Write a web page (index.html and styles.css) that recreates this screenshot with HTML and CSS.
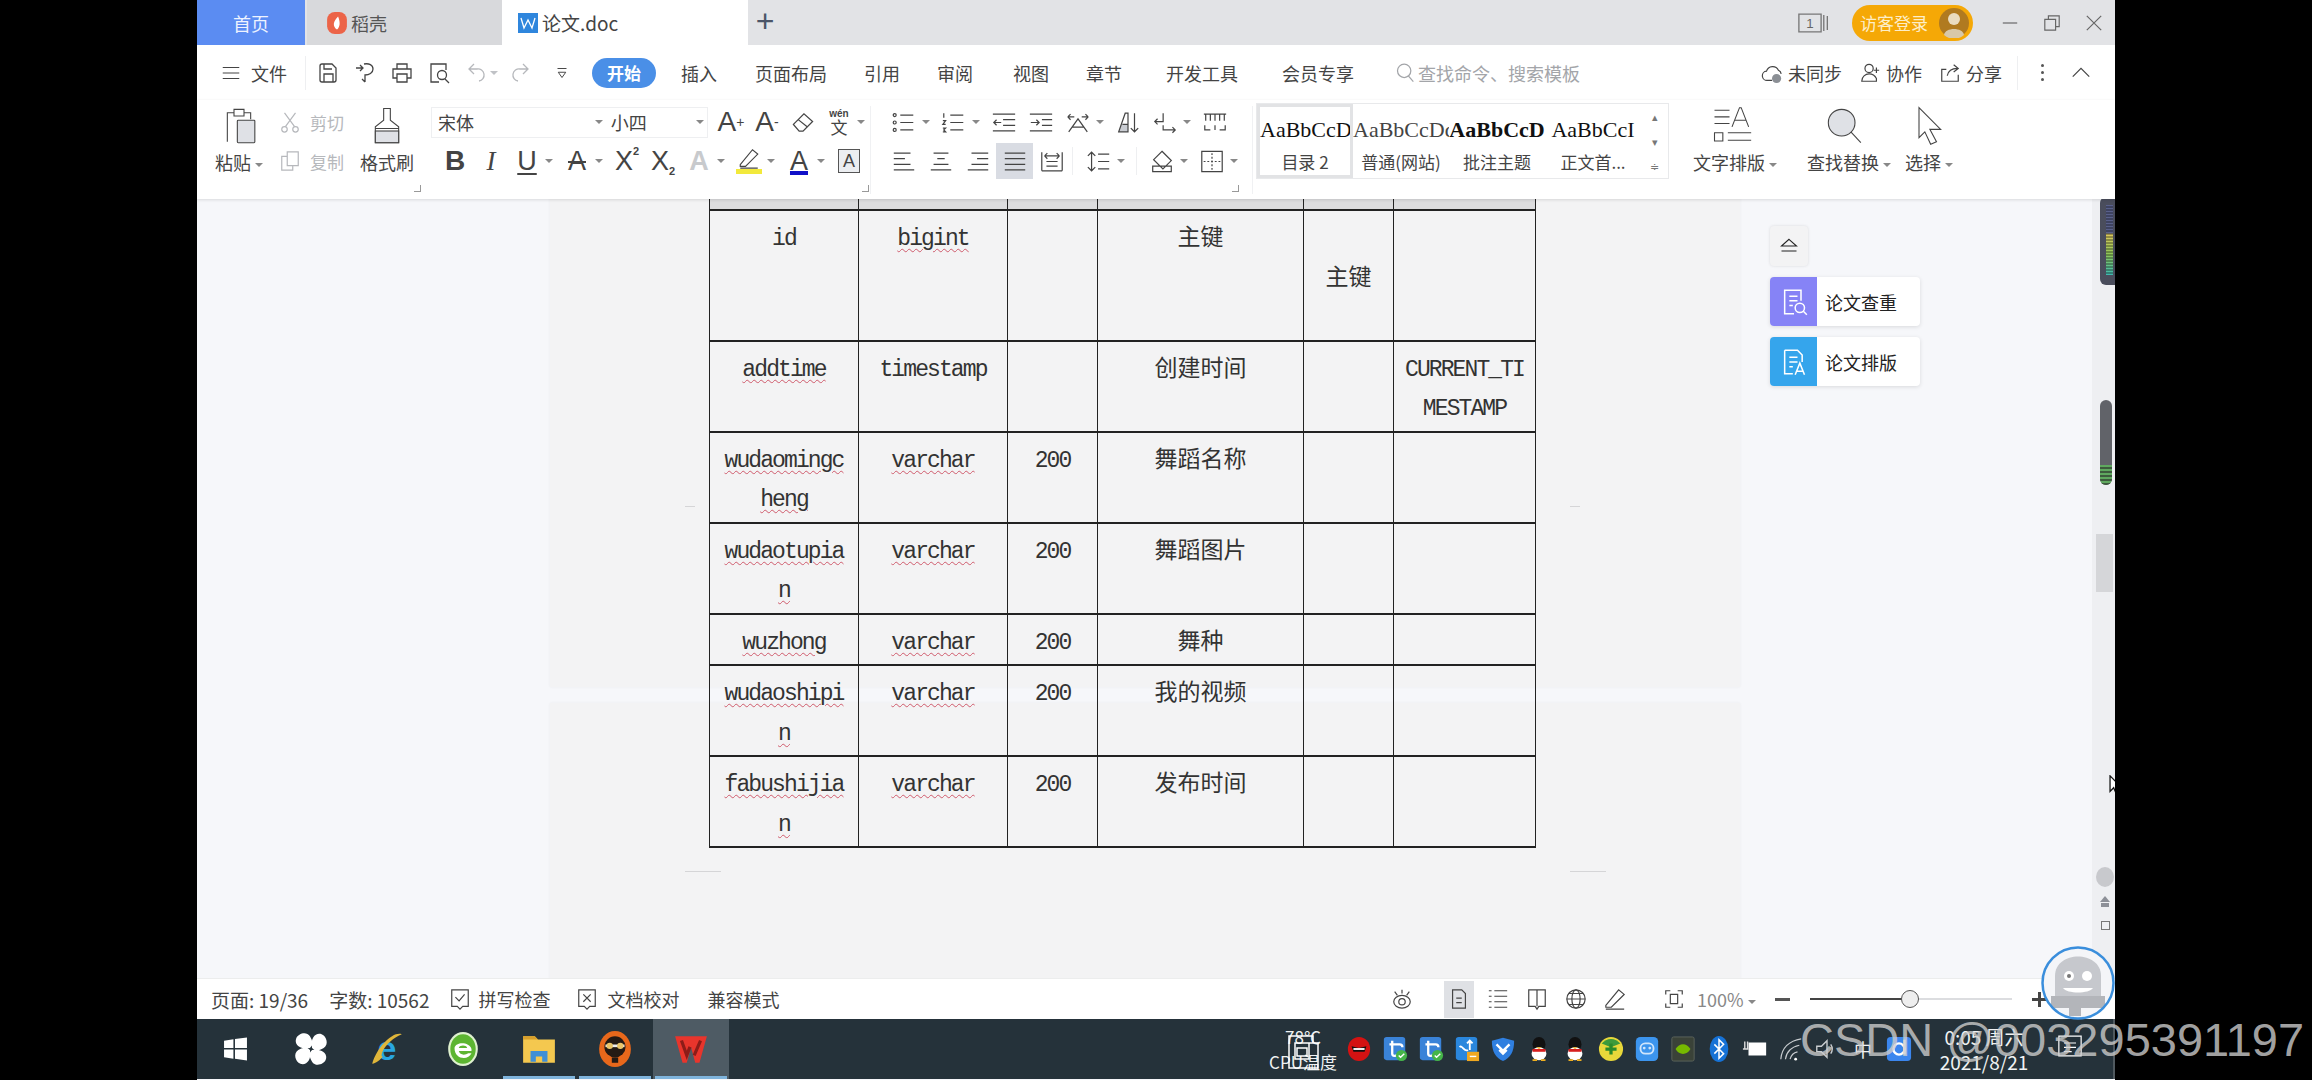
FILE: index.html
```html
<!DOCTYPE html>
<html>

<head>
    <meta charset="UTF-8">
    <link rel="stylesheet" href="styles.css">
    <title>论文.doc</title>
</head>

<body>
    <svg class="sprite" xmlns="http://www.w3.org/2000/svg">
        <symbol id="iMenu" viewBox="0 0 24 24"><path d="M3 6h18M3 12h18M3 18h18" /></symbol>
        <symbol id="iSave" viewBox="0 0 24 24"><path d="M4 5a2 2 0 0 1 2-2h10l4 4v12a2 2 0 0 1-2 2H6a2 2 0 0 1-2-2zM8 21v-8h9v8M8 3v5h8" /></symbol>
        <symbol id="iSend" viewBox="0 0 24 24"><path d="M3 7h7M7 4l3 3-3 3M11 3c5-1 9 1 9 5s-4 6-8 6v7M12 21l-3-3" /></symbol>
        <symbol id="iPrint" viewBox="0 0 24 24"><path d="M7 8V3h10v5M7 17H3V8h18v9h-4M7 13h10v8H7z" /></symbol>
        <symbol id="iPreview" viewBox="0 0 24 24"><path d="M19 9V3H4v18h8" /><circle cx="15" cy="14" r="4.5" /><path d="M18 18l4 4" /></symbol>
        <symbol id="iUndo" viewBox="0 0 24 24"><path d="M10 3L5 8l5 5M5 8h8a6 6 0 0 1 2 12" /></symbol>
        <symbol id="iRedo" viewBox="0 0 24 24"><path d="M14 3l5 5-5 5M19 8h-8a6 6 0 0 0-2 12" /></symbol>
        <symbol id="iCustom" viewBox="0 0 24 24"><path d="M6 6h12M7 11h10l-5 7z" /></symbol>
        <symbol id="iCloud" viewBox="0 0 24 24"><path d="M12 20H7a5 5 0 0 1-1-10 7 7 0 0 1 13-1 5 5 0 0 1 3 4" /><circle class="solid" cx="17" cy="18" r="5" /></symbol>
        <symbol id="iTeam" viewBox="0 0 24 24"><circle cx="11" cy="7" r="4.5" /><path d="M3 21c0-5 4-8 8-8s6 1 8 5v3H3zM19 6v6M16 9h6" /></symbol>
        <symbol id="iShare" viewBox="0 0 24 24"><path d="M8 8H3v13h18v-7M9 15c1-5 5-8 11-8M16 3l5 4-5 4" /></symbol>
        <symbol id="iChevron" viewBox="0 0 24 24"><path d="M3 16l9-9 9 9" /></symbol>
        <symbol id="iScissors" viewBox="0 0 24 24"><circle cx="6" cy="20" r="3" /><circle cx="18" cy="20" r="3" /><path d="M7 17L18 2M17 17L6 2" /></symbol>
        <symbol id="iCopy" viewBox="0 0 24 24"><path d="M9 17V2h12v15zM9 7H3v15h12v-5" /></symbol>
        <symbol id="iPaste" viewBox="0 0 48 48"><path d="M10 43V8h8V4h12v4h8v8M18 8v4h12V8" /><rect class="shade" x="22" y="17" width="21" height="27" rx="1" /></symbol>
        <symbol id="iBrush" viewBox="0 0 48 48"><path d="M20 3h8v14l10 8v19H10V25l10-8zM10 27h28" /><rect class="shade" x="10" y="30" width="28" height="14" /></symbol>
        <symbol id="iEraser" viewBox="0 0 24 24"><path d="M2 14L13 3l9 8-10 10H8zM7 9l10 8" /></symbol>
        <symbol id="iBullets" viewBox="0 0 28 24"><path d="M10 4h14M10 12h14M10 20h14" /><circle cx="4" cy="4" r="1.6" /><circle cx="4" cy="12" r="1.6" /><circle cx="4" cy="20" r="1.6" /></symbol>
        <symbol id="iNumbers" viewBox="0 0 28 24"><path d="M10 4h14M10 12h14M10 20h14M3 2v5M2 10h3l-3 4h3M2 18h3l-2 2 2 2H2" /></symbol>
        <symbol id="iOutdent" viewBox="0 0 28 24"><path d="M2 3h24M2 21h24M13 9h13M13 15h13M11 12H3M6 9l-3 3 3 3" /></symbol>
        <symbol id="iIndent" viewBox="0 0 28 24"><path d="M2 3h24M2 21h24M15 9h11M15 15h11M3 12h9M9 9l3 3-3 3" /></symbol>
        <symbol id="iCross" viewBox="0 0 28 24"><path d="M4 22L14 8l10 14M8 17h12M3 6h7M3 6l3-3M3 6l3 3M25 6h-7M25 6l-3-3M25 6l-3 3" /></symbol>
        <symbol id="iSort" viewBox="0 0 28 24"><path class="shadeFill" d="M4 22l3-8h7v8z" /><path d="M4 22L11 2h3v20zM8 14h6M21 2v20M17 18l4 4 4-4" /></symbol>
        <symbol id="iTurn" viewBox="0 0 28 24"><path d="M12 2v9H3M6 8l-3 3 3 3M12 15v5h13M22 17l3 3-3 3" /></symbol>
        <symbol id="iRuler" viewBox="0 0 28 24"><path d="M2 3h24M4 3v7M9 3v7M14 3v7M19 3v7M24 3v7M3 15v5h6M25 15v5h-6M14 15v5" /></symbol>
        <symbol id="iLeft" viewBox="0 0 28 24"><path d="M3 3h18M3 9h12M3 15h18M3 21h22" /></symbol>
        <symbol id="iCenter" viewBox="0 0 28 24"><path d="M6 3h16M10 9h8M6 15h16M3 21h22" /></symbol>
        <symbol id="iRight" viewBox="0 0 28 24"><path d="M7 3h18M13 9h12M7 15h18M3 21h22" /></symbol>
        <symbol id="iJustify" viewBox="0 0 28 24"><path d="M3 3h22M3 9h22M3 15h22M3 21h22" /></symbol>
        <symbol id="iDistribute" viewBox="0 0 28 24"><path d="M3 2v20M25 2v20M3 22h22M8 12h12M8 17h12M6 6h16M6 6l3-3M6 6l3 3M22 6l-3-3M22 6l-3 3" /></symbol>
        <symbol id="iSpacing" viewBox="0 0 28 24"><path d="M6 2v20M2 6l4-4 4 4M2 18l4 4 4-4M13 4h12M13 12h12M13 20h12" /></symbol>
        <symbol id="iFill" viewBox="0 0 28 24"><path d="M14 1l10 10-9 9-10-10zM4 17h20v6H4z" /></symbol>
        <symbol id="iBorder" viewBox="0 0 28 24"><path d="M3 1h22v22H3z" /><path class="dash" d="M14 3v18M5 12h18" /></symbol>
        <symbol id="iType" viewBox="0 0 48 48"><path d="M3 5h18M3 13h18M3 21h18M3 32h10v10H3zM19 32h28M19 41h28M24 25L33 2h2l9 23M27 17h14" /></symbol>
        <symbol id="iFind" viewBox="0 0 48 48"><circle class="shade" cx="20" cy="20" r="16" /><path d="M31 31l12 13" /></symbol>
        <symbol id="iPointer" viewBox="0 0 48 48"><path d="M12 2l26 26H25l8 15-7 3-7-15-7 7z" /></symbol>
        <symbol id="iCollapse" viewBox="0 0 24 24"><path d="M12 4l9 8H3zM3 18h18" /></symbol>
        <symbol id="iCheck" viewBox="0 0 24 24"><path d="M3 2h18v18h-6l-3 3-3-3H3zM7 10l4 4 6-7" /></symbol>
        <symbol id="iCheckX" viewBox="0 0 24 24"><path d="M3 2h18v18h-6l-3 3-3-3H3zM8 7l8 8M16 7l-8 8" /></symbol>
        <symbol id="iEye" viewBox="0 0 24 24"><ellipse cx="12" cy="15" rx="9" ry="7" /><circle cx="12" cy="15" r="3.5" /><path d="M12 2v4M4 4l3 4M20 4l-3 4" /></symbol>
        <symbol id="iPage" viewBox="0 0 24 24"><path d="M5 2h10l4 4v16H5zM9 11h6M9 16h6" /></symbol>
        <symbol id="iOutline" viewBox="0 0 24 24"><path d="M2 3h3M8 3h14M2 9h3M8 9h14M2 15h3M8 15h14M2 21h3M8 21h14" /></symbol>
        <symbol id="iBook" viewBox="0 0 24 24"><path d="M3 2h18v18h-7l-2 3-2-3H3zM12 2v18" /></symbol>
        <symbol id="iGlobe" viewBox="0 0 24 24"><circle cx="12" cy="12" r="10" /><ellipse cx="12" cy="12" rx="4.5" ry="10" /><path d="M2 12h20M4 6h16M4 18h16" /></symbol>
        <symbol id="iPen" viewBox="0 0 24 24"><path d="M2 19L16 2l6 5L8 21H2zM2 23h20" /></symbol>
        <symbol id="iFull" viewBox="0 0 24 24"><path d="M3 7V3h5M16 3h5v4M21 17v4h-5M8 21H3v-4M8 7h8v10H8z" /></symbol>
    </svg>

    <div class="watermark">CSDN @003295391197</div>

    <div class="app">
        <div class="tabBar">
            <div class="tabHome">首页</div>
            <div class="tab tabDaoke">
                <svg class="tabIcon" viewBox="0 0 18 20"><rect width="18" height="20" rx="7" fill="#ec6448" /><path d="M10 4C5 9 5 13 9 16c3-3 3-7 1-12z" fill="#fff" /></svg>
                稻壳
            </div>
            <div class="tab tabDoc">
                <svg class="tabIcon" viewBox="0 0 20 20"><rect width="20" height="20" fill="#2f86dd" /><path d="M3 5l3 10 4-8 4 8 3-10" fill="none" stroke="#fff" stroke-width="1.3" /></svg>
                论文.doc
            </div>
            <div class="tabAdd">+</div>
            <div class="tabRight">
                <svg class="winCount" viewBox="0 0 36 24"><path d="M1 2h25v20H1zM29 3v18M33 4v16" fill="none" stroke="#777" stroke-width="1.5" /><text x="13.5" y="18" text-anchor="middle" font-size="15" fill="#666" font-family="Liberation Sans">1</text></svg>
                <div class="loginPill">访客登录
                    <svg class="loginFace" viewBox="0 0 30 30"><circle cx="15" cy="15" r="15" fill="#b07a20" /><circle cx="15" cy="11" r="6" fill="#eadcc0" /><path d="M5 27c1-8 19-8 20 0a15 15 0 0 1-20 0z" fill="#d8c8a8" /></svg>
                </div>
                <svg class="winBtn winMin" viewBox="0 0 20 20"><path d="M2 10h16" /></svg>
                <svg class="winBtn" viewBox="0 0 20 20"><path d="M2 6h12v12H2zM6 6V2h12v12h-4" /></svg>
                <svg class="winBtn" viewBox="0 0 20 20"><path d="M2 2l16 16M18 2L2 18" /></svg>
            </div>
        </div>

        <div class="menuBar">
            <svg class="ic menuIcon"><use href="#iMenu" /></svg>
            <span class="menuFile">文件</span>
            <span class="menuSep"></span>
            <svg class="ic quick"><use href="#iSave" /></svg>
            <svg class="ic quick"><use href="#iSend" /></svg>
            <svg class="ic quick"><use href="#iPrint" /></svg>
            <svg class="ic quick"><use href="#iPreview" /></svg>
            <svg class="ic quick off"><use href="#iUndo" /></svg>
            <span class="caret off"></span>
            <svg class="ic quick off"><use href="#iRedo" /></svg>
            <svg class="ic quick quickLast"><use href="#iCustom" /></svg>
            <span class="menuActive">开始</span>
            <span class="menuItem m1">插入</span>
            <span class="menuItem m2">页面布局</span>
            <span class="menuItem m3">引用</span>
            <span class="menuItem m3">审阅</span>
            <span class="menuItem m3b">视图</span>
            <span class="menuItem m3">章节</span>
            <span class="menuItem m4">开发工具</span>
            <span class="menuItem m4">会员专享</span>
            <span class="menuSearch">
                <svg class="searchIcon" viewBox="0 0 24 24"><circle cx="11" cy="10" r="8" /><path d="M16 16l6 7" /></svg>
                查找命令、搜索模板
            </span>
            <div class="menuRight">
                <svg class="ic cloud"><use href="#iCloud" /></svg><span>未同步</span>
                <svg class="ic team"><use href="#iTeam" /></svg><span>协作</span>
                <svg class="ic share"><use href="#iShare" /></svg><span>分享</span>
                <span class="menuSep rightSep"></span>
                <span class="dots"><i></i><i></i><i></i></span>
                <svg class="ic chevron"><use href="#iChevron" /></svg>
            </div>
        </div>

        <div class="ribbon">
            <div class="bigBtn paste">
                <svg class="big"><use href="#iPaste" /></svg>
                <div class="bigLabel">粘贴<span class="caret"></span></div>
            </div>
            <div class="clip">
                <div class="clipRow off"><svg class="ic"><use href="#iScissors" /></svg>剪切</div>
                <div class="clipRow off"><svg class="ic"><use href="#iCopy" /></svg>复制</div>
            </div>
            <div class="bigBtn brush">
                <svg class="big"><use href="#iBrush" /></svg>
                <div class="bigLabel">格式刷</div>
            </div>

            <div class="group fontGroup">
                <div class="row">
                    <div class="fontBox">
                        <div class="fontName">宋体<span class="caret"></span></div>
                        <div class="fontSize">小四<span class="caret"></span></div>
                    </div>
                    <span class="tool letter big1">A<sup>+</sup></span>
                    <span class="tool letter big1">A<sup>-</sup></span>
                    <span class="tool"><svg class="ic"><use href="#iEraser" /></svg></span>
                    <span class="tool wen"><small>wén</small>文</span><span class="caret"></span>
                </div>
                <div class="row rowTwo">
                    <span class="tool letter bold">B</span>
                    <span class="tool letter italic">I</span>
                    <span class="tool letter underl">U</span><span class="caret"></span>
                    <span class="tool letter strike">A</span><span class="caret"></span>
                    <span class="tool letter">X<sup class="tiny">2</sup></span>
                    <span class="tool letter">X<sub class="tiny">2</sub></span>
                    <span class="tool letter ghost">A</span><span class="caret"></span>
                    <span class="tool hiLite"><svg class="ic"><use href="#iPen" /></svg></span><span class="caret"></span>
                    <span class="tool letter blueA">A</span><span class="caret"></span>
                    <span class="tool letter boxA"><b>A</b></span>
                </div>
            </div>

            <div class="group paraGroup">
                <div class="row">
                    <span class="tool"><svg class="ic"><use href="#iBullets" /></svg></span><span class="caret"></span>
                    <span class="tool"><svg class="ic"><use href="#iNumbers" /></svg></span><span class="caret"></span>
                    <span class="tool"><svg class="ic"><use href="#iOutdent" /></svg></span>
                    <span class="tool"><svg class="ic"><use href="#iIndent" /></svg></span>
                    <span class="tool"><svg class="ic"><use href="#iCross" /></svg></span><span class="caret"></span>
                    <span class="tool"><svg class="ic"><use href="#iSort" /></svg></span>
                    <span class="tool"><svg class="ic"><use href="#iTurn" /></svg></span><span class="caret"></span>
                    <span class="tool"><svg class="ic"><use href="#iRuler" /></svg></span>
                </div>
                <div class="row">
                    <span class="tool"><svg class="ic"><use href="#iLeft" /></svg></span>
                    <span class="tool"><svg class="ic"><use href="#iCenter" /></svg></span>
                    <span class="tool"><svg class="ic"><use href="#iRight" /></svg></span>
                    <span class="tool selected"><svg class="ic"><use href="#iJustify" /></svg></span>
                    <span class="tool"><svg class="ic"><use href="#iDistribute" /></svg></span>
                    <span class="toolSep sepOne"></span>
                    <span class="tool"><svg class="ic"><use href="#iSpacing" /></svg></span><span class="caret"></span>
                    <span class="toolSep"></span>
                    <span class="tool"><svg class="ic"><use href="#iFill" /></svg></span><span class="caret"></span>
                    <span class="tool"><svg class="ic"><use href="#iBorder" /></svg></span><span class="caret"></span>
                </div>
            </div>

            <div class="gallery">
                <div class="style first"><div class="sample">AaBbCcDd</div><div>目录 2</div></div>
                <div class="style"><div class="sample thin">AaBbCcDd</div><div>普通(网站)</div></div>
                <div class="style"><div class="sample strong">AaBbCcD</div><div>批注主题</div></div>
                <div class="style"><div class="sample">AaBbCcI</div><div>正文首...</div></div>
                <div class="galleryBtns"><span>▴</span><span>▾</span><span>≑</span></div>
            </div>

            <div class="bigBtn typeset">
                <svg class="big"><use href="#iType" /></svg>
                <div class="bigLabel">文字排版<span class="caret"></span></div>
            </div>
            <div class="bigBtn findBtn">
                <svg class="big"><use href="#iFind" /></svg>
                <div class="bigLabel">查找替换<span class="caret"></span></div>
            </div>
            <div class="bigBtn selectBtn">
                <svg class="big"><use href="#iPointer" /></svg>
                <div class="bigLabel">选择<span class="caret"></span></div>
            </div>
        </div>

        <div class="docArea">
            <div class="page pageOne"></div>
            <div class="page pageTwo"></div>
            <i class="cropMark cropA"></i>
            <i class="cropMark cropB"></i>
            <i class="cropMark cropC"></i>
            <i class="cropMark cropD"></i>

            <table class="dbTable">
                <colgroup>
                    <col class="c1"><col class="c2"><col class="c3"><col class="c4"><col class="c5"><col class="c6">
                </colgroup>
                <tr class="stub"><td></td><td></td><td></td><td></td><td></td><td></td></tr>
                <tr>
                    <td class="latin">id<br>&nbsp;<br>&nbsp;</td>
                    <td class="latin"><u>bigint</u></td>
                    <td></td>
                    <td>主键</td>
                    <td>&nbsp;<br>主键</td>
                    <td></td>
                </tr>
                <tr>
                    <td class="latin"><u>addtime</u></td>
                    <td class="latin">timestamp</td>
                    <td></td>
                    <td>创建时间</td>
                    <td></td>
                    <td class="latin">CURRENT_TI<br>MESTAMP</td>
                </tr>
                <tr>
                    <td class="latin"><u>wudaomingc</u><br><u>heng</u></td>
                    <td class="latin"><u>varchar</u></td>
                    <td class="latin">200</td>
                    <td>舞蹈名称</td>
                    <td></td>
                    <td></td>
                </tr>
                <tr>
                    <td class="latin"><u>wudaotupia</u><br><u>n</u></td>
                    <td class="latin"><u>varchar</u></td>
                    <td class="latin">200</td>
                    <td>舞蹈图片</td>
                    <td></td>
                    <td></td>
                </tr>
                <tr>
                    <td class="latin"><u>wuzhong</u></td>
                    <td class="latin"><u>varchar</u></td>
                    <td class="latin">200</td>
                    <td>舞种</td>
                    <td></td>
                    <td></td>
                </tr>
                <tr>
                    <td class="latin"><u>wudaoshipi</u><br><u>n</u></td>
                    <td class="latin"><u>varchar</u></td>
                    <td class="latin">200</td>
                    <td>我的视频</td>
                    <td></td>
                    <td></td>
                </tr>
                <tr>
                    <td class="latin"><u>fabushijia</u><br><u>n</u></td>
                    <td class="latin"><u>varchar</u></td>
                    <td class="latin">200</td>
                    <td>发布时间</td>
                    <td></td>
                    <td></td>
                </tr>
            </table>

            <div class="sidePanel">
                <div class="sideCollapse"><svg class="ic"><use href="#iCollapse" /></svg></div>
                <div class="sideCard">
                    <span class="sideIcon purple">
                        <svg viewBox="0 0 24 24"><path d="M18 11V2H4v20h8M8 7h7M8 11h7M8 15h3" /><circle cx="17" cy="17" r="4" /><path d="M20 20l3 3" /></svg>
                    </span>论文查重
                </div>
                <div class="sideCard">
                    <span class="sideIcon blue">
                        <svg viewBox="0 0 24 24"><path d="M4 2h11l4 4v6M4 2v20h7M8 8h7M8 12h7M8 16h3M13 23l4-10 4 10M14.5 20h5" /></svg>
                    </span>论文排版
                </div>
            </div>

            <div class="scrollRail">
                <div class="meter"><i></i></div>
                <div class="thumbDark"><i></i></div>
                <div class="thumbLight"></div>
                <div class="railBtns">
                    <span class="railDown"></span>
                    <span class="railUp"></span>
                    <span class="railSquare"></span>
                </div>
            </div>
            <svg class="cursor" viewBox="0 0 14 22"><path d="M1 1v17l4-4 3 7 3-1-3-7h5z" fill="#fff" stroke="#111" stroke-width="1.4" /></svg>
        </div>

        <div class="statusBar">
            <span class="st1">页面: 19/36</span>
            <span class="st2">字数: 10562</span>
            <svg class="ic st3"><use href="#iCheck" /></svg><span>拼写检查</span>
            <svg class="ic st4"><use href="#iCheckX" /></svg><span>文档校对</span>
            <span class="st5">兼容模式</span>
            <div class="statusRight">
                <svg class="ic"><use href="#iEye" /></svg>
                <span class="viewOn"><svg class="ic"><use href="#iPage" /></svg></span>
                <svg class="ic"><use href="#iOutline" /></svg>
                <svg class="ic"><use href="#iBook" /></svg>
                <svg class="ic"><use href="#iGlobe" /></svg>
                <svg class="ic"><use href="#iPen" /></svg>
                <svg class="ic fullIcon"><use href="#iFull" /></svg>
                <span class="zoomVal">100%<span class="caret"></span></span>
                <span class="zoomMinus"></span>
                <span class="slider"><span class="sliderOn"></span><span class="knob"></span></span>
                <span class="zoomPlus"></span>
            </div>
        </div>
        <div class="robot">
            <svg viewBox="0 0 74 74">
                <circle cx="37" cy="37" r="35" fill="#f4f5f8" />
                <path d="M14 52V30c0-26 46-26 46 0v22z" fill="#c6c8cd" />
                <path d="M10 50h54v12H40v8H28v-8H10z" fill="#b3b5ba" />
                <circle cx="28" cy="30" r="5" fill="#fff" /><circle cx="46" cy="30" r="5" fill="#fff" />
                <circle cx="28" cy="30" r="2" fill="#777" />
                <path d="M22 42h30c-4 6-26 6-30 0z" fill="#fff" />
                <circle cx="37" cy="37" r="35.5" fill="none" stroke="#3a8edc" stroke-width="2.5" />
            </svg>
        </div>

        <div class="taskbar">
            <div class="taskApps">
                <span class="app1">
                    <svg viewBox="0 0 24 24"><path d="M1 4l9-1.3V11H1zM11.5 2.500L23 1v10H11.500zM1 12.500h9v8.800l-9-1.300zM11.500 12.500H23V23l-11.500-1.600z" fill="#fff" /></svg>
                </span>
                <span class="app1">
                    <svg viewBox="0 0 34 34"><path d="M16 16C6 18 1 12 3 7s10-7 13-2 3 8 0 11zM18 16c-2-10 4-15 9-13s7 10 2 13-8 3-11 0zM18 18c10-2 15 4 13 9s-10 7-13 2-3-8 0-11zM16 18c2 10-4 15-9 13s-7-10-2-13 8-3 11 0z" fill="#fff" /></svg>
                </span>
                <span class="app1">
                    <svg class="ieIcon" viewBox="0 0 34 34"><text x="17" y="27" text-anchor="middle" font-family="Liberation Sans" font-weight="700" font-size="32" fill="#29a6e0">e</text><path d="M31 3C23 0 8 14 3 31c4-1 8-4 10-7C10 25 13 11 31 3z" fill="#e0b63a" /></svg>
                </span>
                <span class="app1">
                    <svg viewBox="0 0 34 34"><ellipse cx="17" cy="17" rx="14" ry="16" fill="#dff1cf" /><ellipse cx="17" cy="17" rx="12" ry="14" fill="#5cb531" /><path d="M9 16c1-6 14-6 16 1v2H13c1 4 6 4 9 2h3c-3 7-16 6-16-5zm4 0h8c-1-3-7-3-8 0z" fill="#fff" /></svg>
                </span>
                <span class="app1 running">
                    <svg viewBox="0 0 34 34"><path d="M2 5h11l3 3h16v22H2z" fill="#f4c84f" /><path d="M2 5h11l3 3H2z" fill="#d89f2b" /><path d="M9 29V19h16v10h-5v-5h-6v5z" fill="#3f8fd6" /></svg>
                </span>
                <span class="app1 running">
                    <svg viewBox="0 0 34 34"><ellipse cx="17" cy="17" rx="15" ry="17" fill="#e8681b" /><circle cx="17" cy="15" r="10" fill="#241a14" /><path d="M8 14h18" stroke="#eee" stroke-width="2.5" /><circle cx="12" cy="14" r="3" fill="#e9c56a" /><circle cx="22" cy="14" r="3" fill="#e9c56a" /><rect x="14" y="25" width="6" height="5" fill="#241a14" /></svg>
                </span>
                <span class="app1 running current">
                    <svg viewBox="0 0 34 34"><path d="M2 5h30l-7 25h-4l-4-15-4 15H9z" fill="#e8352c" /><path d="M8 9l5 14 3-8M26 9l-6 14" fill="none" stroke="#8c1c18" stroke-width="3" /></svg>
                </span>
            </div>

            <div class="cpuTemp">
                <div>78℃</div>
                <div>CPU温度</div>
                <svg class="cpuIcon" viewBox="0 0 36 36"><path d="M4 2h24v7h5v25H4zM28 9H10v16h14V9M12 14h10v8H12z" fill="none" stroke="#fff" stroke-width="1.5" /></svg>
            </div>

            <div class="tray">
                <span><svg viewBox="0 0 28 28"><ellipse cx="14" cy="14" rx="12" ry="13" fill="#d41212" /><path d="M6 11l8 2 8-2-2 6H8z" fill="#111" /><path d="M8 14h12" stroke="#fff" stroke-width="2" /></svg></span>
                <span><svg viewBox="0 0 28 28"><rect x="2" y="1" width="23" height="25" rx="3" fill="#3a83d8" /><path d="M11 5v14c0 3 4 3 7 1M8 9h11c2 0 3 1 3 3" fill="none" stroke="#fff" stroke-width="2.5" /><circle cx="21" cy="21" r="6" fill="#45b549" /><path d="M18 21l2 2 4-4" stroke="#fff" stroke-width="1.5" fill="none" /></svg></span>
                <span><svg viewBox="0 0 28 28"><rect x="2" y="1" width="23" height="25" rx="3" fill="#3a83d8" /><path d="M11 5v14c0 3 4 3 7 1M8 9h11c2 0 3 1 3 3" fill="none" stroke="#fff" stroke-width="2.5" /><circle cx="21" cy="21" r="6" fill="#45b549" /><path d="M18 21l2 2 4-4" stroke="#fff" stroke-width="1.5" fill="none" /></svg></span>
                <span><svg viewBox="0 0 28 28"><rect x="2" y="1" width="23" height="25" rx="3" fill="#2a87dd" /><path d="M6 12c3-3 5 6 9 3M17 5v10M14 8l3-3 3 3" fill="none" stroke="#fff" stroke-width="2" /><rect x="14" y="17" width="13" height="10" fill="#f0a820" /><path d="M17 22h7" stroke="#fff" stroke-width="1.5" /></svg></span>
                <span><svg viewBox="0 0 28 28"><path d="M14 2l12 3c0 12-4 18-12 22C6 23 2 17 2 5z" fill="#2f7fe0" /><path d="M7 9l7 7 7-7M10 15l4 4 4-4" fill="none" stroke="#fff" stroke-width="2.5" /></svg></span>
                <span><svg viewBox="0 0 28 28"><ellipse cx="14" cy="9" rx="7" ry="8" fill="#111" /><ellipse cx="14" cy="19" rx="8" ry="7" fill="#fff" /><path d="M7 14h14v3H7z" fill="#d61f1f" /><path d="M11 12l3 2 3-2z" fill="#f0b020" /><path d="M7 26h5M16 26h5" stroke="#f0b020" stroke-width="2" /></svg></span>
                <span><svg viewBox="0 0 28 28"><ellipse cx="14" cy="9" rx="7" ry="8" fill="#111" /><ellipse cx="14" cy="19" rx="8" ry="7" fill="#fff" /><path d="M7 14h14v3H7z" fill="#d61f1f" /><path d="M11 12l3 2 3-2z" fill="#f0b020" /><path d="M7 26h5M16 26h5" stroke="#f0b020" stroke-width="2" /></svg></span>
                <span><svg viewBox="0 0 28 28"><circle cx="14" cy="14" r="13" fill="#e8d83a" /><path d="M4 8a13 13 0 0 1 20 0l-10 4z" fill="#3c9a3c" /><path d="M14 8v12M8 14h12" stroke="#2a8a2a" stroke-width="3.5" /></svg></span>
                <span><svg viewBox="0 0 28 28"><rect x="2" y="1" width="24" height="26" rx="5" fill="#3c95ee" /><rect x="7" y="8" width="14" height="11" rx="5" fill="none" stroke="#cfe5fb" stroke-width="2" /><circle cx="11" cy="13" r="1.5" fill="#cfe5fb" /><circle cx="17" cy="13" r="1.5" fill="#cfe5fb" /></svg></span>
                <span><svg viewBox="0 0 28 28"><rect x="2" y="1" width="24" height="26" rx="2" fill="#3a4238" stroke="#5d655c" /><path d="M6 14c4-7 12-7 16 0-4 7-12 7-16 0z" fill="#76b900" /></svg></span>
                <span><svg viewBox="0 0 28 28"><ellipse cx="14" cy="14" rx="10" ry="14" fill="#1672d6" /><path d="M9 9l10 10-5 5V4l5 5L9 19" fill="none" stroke="#fff" stroke-width="1.6" /></svg></span>
                <span><svg viewBox="0 0 28 28"><rect x="7" y="7" width="19" height="14" fill="#fff" /><path d="M1 14h6M3 6v8M6 6v8" stroke="#ddd" stroke-width="1.5" /></svg></span>
                <span><svg viewBox="0 0 28 28"><path d="M3 25C4 13 12 5 25 3M8 25c1-8 6-13 15-15M13 25c1-4 3-7 8-8" fill="none" stroke="#c9cdd0" stroke-width="1.3" /><circle cx="19" cy="25" r="1.5" fill="#fff" /></svg></span>
                <span><svg viewBox="0 0 28 28"><path d="M3 11h5l6-6v18l-6-6H3zM18 9c2 3 2 7 0 10" fill="none" stroke="#c9cdd0" stroke-width="1.5" /></svg></span>
                <span class="trayIme">中</span>
                <span><svg viewBox="0 0 28 28"><rect x="1" y="1" width="26" height="26" rx="4" fill="#3b86ee" /><circle cx="14" cy="14" r="6" fill="none" stroke="#fff" stroke-width="2.5" /><path d="M20 4v16" stroke="#fff" stroke-width="2.5" /></svg></span>
            </div>

            <div class="clock">
                <div>0:05 周六</div>
                <div>2021/8/21</div>
            </div>
            <svg class="notify" viewBox="0 0 28 32"><path d="M1 1h26v23H1zM7 9h14M7 14h14M7 19h9" fill="none" stroke="#fff" stroke-width="1.4" /></svg>
        </div>
    </div>
</body>

</html>
```

FILE: styles.css
```css
* {
    box-sizing: border-box;
}

body {
    margin: 0;
    background: black;
    font-family: "Noto Sans CJK SC", "Liberation Sans", sans-serif;
    font-size: 18px;
    color: #444;
    overflow: hidden;
}

.sprite {
    width: 0;
    height: 0;
    position: absolute;
}

.sprite path,
.sprite circle,
.sprite ellipse,
.sprite rect {
    fill: none;
    stroke: currentColor;
    stroke-width: 1.3;
}

.sprite .shade {
    fill: #dfe1e6;
    stroke: #444;
}

.sprite .shadeFill {
    fill: #c9ccd2;
    stroke: none;
}

.sprite .solid {
    fill: #8b8f95;
    stroke: none;
}

.sprite .dash {
    stroke-dasharray: 2 2;
}

.ic {
    width: 22px;
    height: 22px;
    flex: none;
    display: block;
}

.big {
    width: 48px;
    height: 40px;
    display: block;
    margin: 0 auto;
}

.off {
    color: #b6b8bc;
}

.caret {
    display: inline-block;
    flex: none;
    width: 0;
    height: 0;
    border: solid 4px transparent;
    border-top: solid 4px #888;
    border-bottom-width: 0;
    margin-left: 4px;
    vertical-align: middle;
}

.caret.off {
    border-top-color: #c0c2c6;
}

.watermark {
    position: absolute;
    left: 1800px;
    top: 1012px;
    font-family: "Liberation Sans", sans-serif;
    font-size: 47px;
    line-height: 56px;
    color: rgba(205, 205, 205, 0.8);
    white-space: nowrap;
    z-index: 5;
}

.app {
    width: 1918px;
    height: 1080px;
    margin-left: 197px;
    display: flex;
    flex-direction: column;
    position: relative;
    overflow: hidden;
    background: #f6f7fa;
}

/* tabs */
.tabBar {
    height: 45px;
    flex: none;
    display: flex;
    background: #e2e3e6;
    align-items: stretch;
}

.tabHome {
    width: 108px;
    background: #5b8cf2;
    color: #eef3ff;
    text-align: center;
    line-height: 46px;
}

.tab {
    display: flex;
    align-items: center;
    gap: 4px;
    color: #555;
}

.tabDaoke {
    width: 195px;
    margin-left: 2px;
    padding-left: 20px;
    background: #d8d9dc;
}

.tabDoc {
    width: 246px;
    padding-left: 16px;
    background: white;
    font-size: 19px;
    color: #444;
}

.tabIcon {
    width: 20px;
    height: 22px;
}

.tabAdd {
    width: 34px;
    text-align: center;
    font-family: "Liberation Sans", sans-serif;
    font-size: 32px;
    line-height: 42px;
    color: #4b5568;
}

.tabRight {
    margin-left: auto;
    display: flex;
    align-items: center;
}

.winCount {
    width: 32px;
    height: 22px;
}

.loginPill {
    width: 121px;
    height: 36px;
    margin-left: 22px;
    padding-left: 8px;
    border-radius: 18px;
    background: #f5a806;
    color: #fdeec9;
    font-size: 17px;
    display: flex;
    align-items: center;
    justify-content: space-between;
}

.loginFace {
    width: 30px;
    height: 30px;
    margin-right: 4px;
}

.winBtn {
    width: 18px;
    height: 18px;
    margin-left: 24px;
    fill: none;
    stroke: #666;
    stroke-width: 1.3;
}

.winMin {
    margin-left: 28px;
}

.winBtn:last-child {
    margin-right: 12px;
}

/* menu row */
.menuBar {
    height: 55px;
    flex: none;
    display: flex;
    align-items: center;
    background: white;
    padding-left: 23px;
    position: relative;
}

.menuFile {
    margin-left: 9px;
}

.menuSep {
    width: 1px;
    height: 34px;
    background: #eeeff1;
    margin-left: 18px;
}

.quick {
    width: 24px;
    height: 24px;
    margin-left: 13px;
}

.menuSep + .quick {
    margin-left: 10px;
}

.quick.off + .caret {
    margin-left: 2px;
    margin-right: -2px;
}

.quickLast {
    width: 18px;
    margin-left: 20px;
}

.menuActive {
    width: 64px;
    height: 30px;
    margin-left: 21px;
    border-radius: 15px;
    background: #4a8fe7;
    color: white;
    font-weight: 700;
    font-size: 17px;
    text-align: center;
    line-height: 30px;
}

.menuItem {
    font-size: 18px;
}

.m1 {
    margin-left: 25px;
}

.m2 {
    margin-left: 38px;
}

.m3 {
    margin-left: 37px;
}

.m3b {
    margin-left: 40px;
}

.m4 {
    margin-left: 44px;
}

.menuSearch {
    margin-left: 41px;
    display: flex;
    align-items: center;
    gap: 3px;
    color: #a3a5a9;
}

.searchIcon {
    width: 20px;
    height: 21px;
    fill: none;
    stroke: #a3a5a9;
    stroke-width: 1.5;
}

.menuRight {
    position: absolute;
    right: 23px;
    top: 0;
    height: 55px;
    display: flex;
    align-items: center;
    gap: 5px;
}

.team,
.share {
    margin-left: 12px;
}

.rightSep {
    margin-left: 10px;
}

.dots {
    margin-left: 18px;
    display: flex;
    flex-direction: column;
    gap: 4px;
}

.dots i {
    width: 3px;
    height: 3px;
    background: #555;
    border-radius: 50%;
}

.chevron {
    margin-left: 21px;
}

/* ribbon */
.ribbon {
    height: 99px;
    flex: none;
    display: flex;
    align-items: flex-start;
    background: white;
    padding-top: 6px;
    box-shadow: 0 1px 3px rgba(0, 0, 0, 0.12);
    position: relative;
    z-index: 2;
}

.bigBtn {
    flex: none;
    text-align: center;
}

.bigLabel {
    margin-top: 2px;
    line-height: 28px;
    font-size: 18px;
    white-space: nowrap;
}

.paste {
    width: 46px;
    margin-left: 18px;
}

.clip {
    width: 75px;
    margin-left: 18px;
}

.clipRow {
    height: 32px;
    margin-bottom: 7px;
    display: flex;
    align-items: center;
    gap: 9px;
    font-size: 17px;
}

.clipRow .ic {
    width: 22px;
    height: 24px;
}

.brush {
    width: 56px;
    margin-left: 5px;
}

.brush::after,
.fontGroup::after,
.paraGroup::after {
    content: "";
    position: absolute;
    top: 85px;
    width: 6px;
    height: 6px;
    border-right: solid 1px #999;
    border-bottom: solid 1px #999;
}

.brush::after {
    left: 217px;
}

.fontGroup::after {
    left: 665px;
}

.paraGroup::after {
    left: 1035px;
}

.group {
    flex: none;
}

.row {
    display: flex;
    align-items: center;
    height: 32px;
    margin-bottom: 5px;
    white-space: nowrap;
}

.row + .row {
    height: 36px;
}

.rowTwo {
    padding-left: 6px;
}

.fontGroup {
    width: 440px;
    margin-left: 16px;
    border-right: solid 1px #f0f1f3;
    height: 88px;
}

.fontBox {
    width: 277px;
    height: 31px;
    display: flex;
    border: solid 1px #eeeff1;
    margin-right: 5px;
}

.fontName,
.fontSize {
    display: flex;
    align-items: center;
    justify-content: space-between;
    padding: 0 3px 0 6px;
}

.fontName {
    width: 175px;
}

.fontSize {
    width: 102px;
    padding-left: 5px;
}

.tool {
    width: 36px;
    height: 100%;
    flex: none;
    display: flex;
    align-items: center;
    justify-content: center;
    color: #444;
}

.tool .ic {
    width: 26px;
    height: 23px;
}

.tool + .caret {
    margin-left: 0;
    margin-right: 6px;
}

.letter {
    font-family: "Liberation Sans", sans-serif;
    font-size: 27px;
    line-height: 1;
}

.letter sup,
.letter sub {
    font-size: 14px;
    line-height: 0;
}

.letter .tiny {
    font-size: 11px;
    font-weight: 700;
    align-self: flex-start;
    margin-top: 8px;
}

.letter sub.tiny {
    align-self: flex-end;
    margin-bottom: 8px;
    margin-top: 0;
}

.big1 {
    font-size: 28px;
    font-weight: 300;
}

.wen {
    flex-direction: column;
    font-size: 17px;
    line-height: 16px;
}

.wen small {
    font-size: 10px;
    line-height: 10px;
    font-weight: 700;
    font-family: "Liberation Sans", sans-serif;
}

.bold {
    font-weight: 700;
    font-size: 28px;
}

.italic {
    font-style: italic;
    font-family: "Liberation Serif", serif;
}

.underl {
    text-decoration: underline;
    text-underline-offset: 3px;
}

.strike {
    text-decoration: line-through;
}

.ghost {
    color: #c8cacd;
    font-weight: 700;
}

.hiLite .ic {
    border-bottom: solid 5px #f2e93b;
    height: 26px;
}

.blueA {
    text-decoration: underline 4px #1010c8;
    text-underline-offset: 1px;
}

.boxA b {
    width: 22px;
    height: 24px;
    font-weight: 400;
    font-size: 18px;
    line-height: 22px;
    text-align: center;
    border: solid 1px #555;
    background: #eceef1;
}

.paraGroup {
    width: 368px;
    margin-left: 14px;
    border-right: solid 1px #f0f1f3;
    height: 88px;
}

.paraGroup .tool {
    width: 37px;
}

.paraGroup .tool + .caret {
    margin-left: 0;
    margin-right: 5px;
}

.selected {
    background: #d9dce3;
}

.toolSep {
    width: 1px;
    height: 28px;
    background: #eeeff1;
    margin: 0 6px;
}

.sepOne {
    margin: 0 7px 0 2px;
}

.gallery {
    width: 413px;
    height: 76px;
    flex: none;
    margin: -3px 0 0 3px;
    display: flex;
    border: solid 1px #e8e9eb;
    text-align: center;
    font-size: 17px;
    line-height: 28px;
}

.style {
    width: 96px;
    flex: none;
    overflow: hidden;
    white-space: nowrap;
    padding-top: 8px;
    color: #444;
}

.style.first {
    border: solid 3px #e2e3e5;
    padding-top: 5px;
}

.sample {
    font-family: "Liberation Serif", serif;
    font-size: 22px;
    line-height: 36px;
    color: #111;
}

.thin {
    color: #444;
}

.strong {
    font-weight: 700;
}

.galleryBtns {
    flex: 1;
    display: flex;
    flex-direction: column;
    justify-content: space-around;
    font-size: 11px;
    line-height: 16px;
    color: #777;
}

.typeset {
    width: 77px;
    margin-left: 24px;
}

.findBtn {
    width: 76px;
    margin-left: 37px;
}

.selectBtn {
    width: 38px;
    margin-left: 22px;
}

/* document */
.docArea {
    height: 779px;
    flex: none;
    position: relative;
    overflow: hidden;
}

.page {
    position: absolute;
    left: 353px;
    width: 1190px;
    background: #f3f3f4;
    box-shadow: 0 0 3px rgba(0, 0, 0, 0.05);
}

.pageOne {
    top: -20px;
    height: 508px;
}

.pageTwo {
    top: 504px;
    height: 300px;
}

.cropMark {
    position: absolute;
    width: 36px;
    height: 1px;
    background: #d5d5d7;
}

.cropA {
    left: 488px;
    top: 672px;
}

.cropB {
    left: 1373px;
    top: 672px;
}

.cropC {
    left: 488px;
    top: 307px;
    width: 10px;
}

.cropD {
    left: 1373px;
    top: 307px;
    width: 10px;
}

.dbTable {
    position: relative;
    margin-left: 512px;
    width: 826px;
    table-layout: fixed;
    border-collapse: collapse;
    font-size: 23px;
    line-height: 39.5px;
    color: #333;
    text-align: center;
}

.c1,
.c2 {
    width: 149px;
}

.c3 {
    width: 90px;
}

.c4 {
    width: 206px;
}

.c5 {
    width: 90px;
}

.c6 {
    width: 142px;
}

.dbTable td {
    padding: 5px 0;
    border: solid 1px #222;
    border-top-width: 2px;
    border-bottom-width: 2px;
    vertical-align: top;
    white-space: nowrap;
}

.dbTable .stub td {
    height: 11px;
    padding: 0;
    border-top: none;
    background: #dcdcde;
    line-height: 0;
}

.dbTable .latin {
    padding: 9px 0 1px;
    font-family: "Liberation Mono", monospace;
    font-size: 23px;
    letter-spacing: -1.9px;
}

.dbTable u {
    text-decoration: underline wavy #cf5a6c 1px;
    text-underline-offset: 3px;
}

.sidePanel {
    position: absolute;
    left: 1573px;
    top: 27px;
    display: flex;
    flex-direction: column;
    align-items: flex-start;
    gap: 11px;
    color: #222;
}

.sideCollapse {
    width: 38px;
    height: 40px;
    display: flex;
    align-items: center;
    justify-content: center;
    border-radius: 4px;
    background: #f3f3f4;
    box-shadow: 0 0 3px rgba(0, 0, 0, 0.12);
}

.sideCollapse .ic {
    width: 20px;
    height: 20px;
}

.sideCard {
    width: 150px;
    height: 49px;
    display: flex;
    align-items: center;
    gap: 8px;
    border-radius: 4px;
    background: white;
    box-shadow: 0 1px 4px rgba(0, 0, 0, 0.12);
    overflow: hidden;
}

.sideIcon {
    width: 47px;
    height: 49px;
    display: flex;
    align-items: center;
    justify-content: center;
}

.sideIcon svg {
    width: 28px;
    height: 28px;
    fill: none;
    stroke: white;
    stroke-width: 1.3;
}

.purple {
    background: #8683f6;
}

.blue {
    background: #35a5ec;
}

.scrollRail {
    position: absolute;
    right: 0;
    top: 0;
    width: 23px;
    height: 100%;
    background: #eeeff2;
}

.meter {
    position: absolute;
    right: 0;
    top: -2px;
    width: 15px;
    height: 88px;
    border-radius: 6px 0 0 6px;
    background: #4a4d5c;
}

.meter i {
    position: absolute;
    left: 6px;
    top: 8px;
    width: 7px;
    height: 70px;
    background: repeating-linear-gradient(180deg, transparent 0 1px, rgba(0, 0, 0, 0.3) 1px 3px), linear-gradient(180deg, #59608a 0 40%, #d9c65e 42%, #8fc65a 70%, #3fb7b0);
}

.thumbDark {
    position: absolute;
    right: 3px;
    top: 201px;
    width: 12px;
    height: 85px;
    border-radius: 6px;
    background: #616369;
    overflow: hidden;
}

.thumbDark i {
    position: absolute;
    left: 0;
    bottom: 0;
    width: 100%;
    height: 20px;
    background: repeating-linear-gradient(180deg, #5fa85f 0 2px, #3e5b3e 2px 4px);
}

.thumbLight {
    position: absolute;
    right: 2px;
    top: 335px;
    width: 17px;
    height: 58px;
    background: #d5d6d9;
}

.railBtns {
    position: absolute;
    right: 1px;
    top: 668px;
    width: 18px;
    display: flex;
    flex-direction: column;
    align-items: center;
    gap: 9px;
}

.railDown {
    width: 18px;
    height: 20px;
    border-radius: 50%;
    background: #c8c9cd;
}

.railUp {
    width: 0;
    height: 0;
    border: solid 5px transparent;
    border-bottom: solid 6px #8d9098;
    border-top-width: 0;
    box-shadow: 0 6px 0 -1px #8d9098;
}

.railSquare {
    width: 9px;
    height: 9px;
    margin-top: 10px;
    border: solid 1px #777;
}

.cursor {
    position: absolute;
    right: -7px;
    top: 576px;
    width: 13px;
    height: 20px;
}

/* status */
.statusBar {
    height: 41px;
    flex: none;
    display: flex;
    align-items: center;
    background: white;
    border-top: solid 1px #eceded;
    position: relative;
}

.statusBar .ic {
    width: 22px;
    height: 24px;
}

.st1 {
    margin-left: 14px;
    font-size: 19px;
}

.st2 {
    margin-left: 21px;
    font-size: 19px;
}

.st3 {
    margin-left: 20px;
    margin-right: 7px;
}

.st4 {
    margin-left: 26px;
    margin-right: 9px;
}

.st5 {
    margin-left: 28px;
}

.statusRight {
    position: absolute;
    left: 1194px;
    top: 0;
    height: 100%;
    display: flex;
    align-items: center;
    gap: 17px;
}

.viewOn {
    width: 30px;
    height: 37px;
    margin: 0 -4px 0 14px;
    display: flex;
    align-items: center;
    justify-content: center;
    background: #dfe1e5;
}

.fullIcon {
    margin-left: 20px;
}

.zoomVal {
    margin-left: -5px;
    color: #888;
}

.zoomMinus {
    width: 15px;
    height: 3px;
    background: #555;
    margin-left: 2px;
}

.slider {
    width: 202px;
    height: 2px;
    margin-left: 3px;
    background: #dcdde0;
    position: relative;
}

.sliderOn {
    position: absolute;
    left: 0;
    top: 0;
    width: 100px;
    height: 2px;
    background: #444;
}

.knob {
    position: absolute;
    left: 91px;
    top: -8px;
    width: 18px;
    height: 18px;
    border: solid 1px #555;
    border-radius: 50%;
    background: #eee;
}

.zoomPlus {
    width: 15px;
    height: 3px;
    margin-left: 3px;
    background: #444;
    position: relative;
}

.zoomPlus::after {
    content: "";
    position: absolute;
    left: 6px;
    top: -6px;
    width: 3px;
    height: 15px;
    background: #444;
}

.robot {
    position: absolute;
    right: 0;
    bottom: 60px;
    width: 74px;
    height: 74px;
    z-index: 3;
}

.robot svg {
    display: block;
}

/* taskbar */
.taskbar {
    height: 60px;
    flex: none;
    display: flex;
    align-items: center;
    background: #25323a;
    color: #f0f2f3;
    border-right: solid 2px #50595f;
}

.taskApps {
    display: flex;
    align-self: stretch;
    width: 532px;
    flex: none;
}

.app1 {
    width: 76px;
    display: flex;
    align-items: center;
    justify-content: center;
    position: relative;
}

.app1 svg {
    width: 36px;
    height: 36px;
}

.app1 .ieIcon {
    overflow: visible;
}

.app1:first-child svg {
    width: 25px;
    height: 30px;
}

.running::after {
    content: "";
    position: absolute;
    left: 2px;
    right: 2px;
    bottom: 0;
    height: 3px;
    background: #7fb4dc;
}

.current {
    background: #4e5b64;
}

.cpuTemp {
    width: 76px;
    margin-left: 536px;
    flex: none;
    position: relative;
    text-align: center;
    font-size: 17px;
    line-height: 25px;
    white-space: nowrap;
}

.cpuIcon {
    position: absolute;
    left: 20px;
    top: 10px;
    width: 36px;
    height: 36px;
}

.tray {
    display: flex;
    flex: none;
    align-items: center;
}

.tray span {
    width: 36px;
    display: flex;
    justify-content: center;
}

.tray svg {
    width: 26px;
    height: 26px;
}

.trayIme {
    font-size: 18px;
}

.clock {
    width: 110px;
    margin-left: 12px;
    flex: none;
    text-align: center;
    font-size: 19px;
    line-height: 25px;
}

.notify {
    width: 24px;
    height: 28px;
    margin-left: 19px;
}
```
